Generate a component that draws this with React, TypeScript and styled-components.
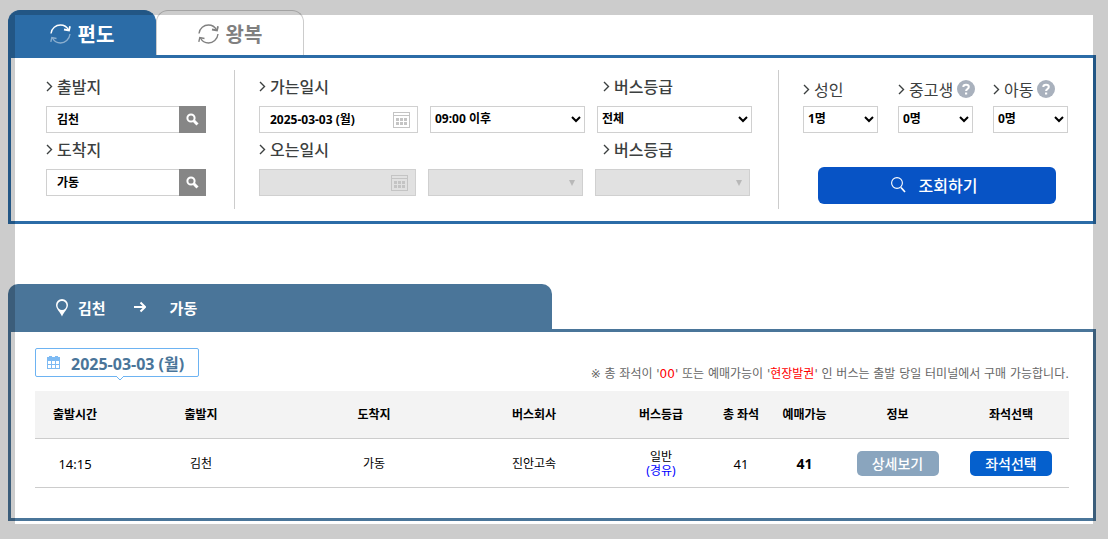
import React from 'react';
import styled, { createGlobalStyle } from 'styled-components';

const latin = "'Noto Sans', 'Noto Sans CJK KR', sans-serif";
const wide = "'DejaVu Sans', 'Noto Sans CJK KR', sans-serif";
const korean = "'Noto Sans CJK KR', sans-serif";

const GlobalStyle = createGlobalStyle`
  *, *::before, *::after { box-sizing: border-box; }
  body { margin: 0; background: #fff; color: #000; font-family: ${latin}; font-size: 12px; }
  button, input, select { font: inherit; color: inherit; border-radius: 0; }
  svg { flex: none; }
`;

const Page = styled.main`
  padding: 10px 12px 18px 8px;
`;

const Frame = styled.div`
  position: fixed;
  inset: 0;
  border: 15px solid rgba(0, 0, 0, 0.2);
  pointer-events: none;
`;

const Tabs = styled.div`
  display: flex;
  height: 45px;
`;

const Tab = styled.button<{ $active?: boolean }>`
  display: flex;
  align-items: center;
  justify-content: center;
  gap: 7px;
  width: 148px;
  padding: 2px 0 0 0;
  border: 1px solid ${p => (p.$active ? '#2b6ca7' : '#ccc')};
  border-bottom: 0;
  border-radius: 12px 12px 0 0;
  background: ${p => (p.$active ? '#2b6ca7' : '#fff')};
  color: ${p => (p.$active ? '#fff' : '#808080')};
  font-family: ${korean};
  font-size: 20px;
  font-weight: 700;
  line-height: 28px;
`;

const Panel = styled.section<{ $color: string }>`
  border: 3px solid ${p => p.$color};
`;

const SearchForm = styled.form`
  display: flex;
  padding: 12px 25px 12px 35px;
  min-height: 163px;
`;

const Group = styled.div<{ $grow?: boolean }>`
  flex: ${p => (p.$grow ? '1 1 0' : 'none')};
  padding-right: ${p => (p.$grow ? 26 : 28)}px;
  margin-right: 24px;
  border-right: 1px solid #ccc;
`;

const Line = styled.div`
  display: flex;
  gap: 12px;
  height: 63px;
`;

const Field = styled.div<{ $width: number }>`
  flex: 0 1 ${p => p.$width}px;
  min-width: 0;
`;

const Caption = styled.label<{ $indent?: number; $light?: boolean }>`
  display: flex;
  align-items: center;
  gap: 4px;
  height: 36px;
  padding-top: ${p => (p.$light ? 2 : 0)}px;
  padding-bottom: ${p => (p.$light ? 0 : 4)}px;
  padding-left: ${p => p.$indent || 0}px;
  color: #3c4040;
  font-family: ${korean};
  font-size: 16px;
  font-weight: ${p => (p.$light ? 400 : 500)};
  line-height: 24px;
  white-space: nowrap;
`;

const InputBox = styled.div<{ $off?: boolean }>`
  display: flex;
  align-items: center;
  height: 27px;
  border: 1px solid #d0d0d0;
  background: ${p => (p.$off ? '#e1e1e1' : '#fff')};
`;

const TextInput = styled.input`
  flex: 1;
  min-width: 0;
  height: 23px;
  padding: 0 0 2px 10px;
  border: 0;
  background: transparent;
  font-size: 12px;
  font-weight: 700;
`;

const IconButton = styled.button<{ $dark?: boolean }>`
  display: flex;
  align-items: center;
  justify-content: center;
  align-self: stretch;
  width: ${p => (p.$dark ? 27 : 32)}px;
  margin: ${p => (p.$dark ? '-1px' : '0')};
  padding: 0;
  border: 0;
  background: ${p => (p.$dark ? '#868686' : 'transparent')};
`;

const SelectWrap = styled.div`
  position: relative;
`;

const Select = styled.select`
  display: block;
  width: 100%;
  height: 27px;
  padding: 0 16px 2px 4px;
  border: 1px solid #d0d0d0;
  background: #fff;
  appearance: none;
  font-size: 12px;
  font-weight: 700;
  &:disabled { background: #e1e1e1; opacity: 1; }
`;

const SelectMark = styled.svg`
  position: absolute;
  right: 4px;
  top: 8px;
  pointer-events: none;
`;

const Passengers = styled.div`
  flex: none;
  width: 265px;
`;

const Counts = styled.div`
  display: flex;
  justify-content: space-between;
`;

const SearchButton = styled.button`
  display: flex;
  align-items: center;
  justify-content: center;
  gap: 13px;
  width: 238px;
  height: 37px;
  margin: 34px 0 0 15px;
  padding: 0 6px 2px 0;
  border: 0;
  border-radius: 6px;
  background: #0753c5;
  color: #fff;
  font-family: ${korean};
  font-size: 16px;
  font-weight: 500;
  line-height: 24px;
`;

const Results = styled.div`
  margin-top: 60px;
`;

const Route = styled.h2`
  display: flex;
  align-items: center;
  width: 50%;
  height: 45px;
  margin: 0;
  padding: 2px 0 0 47px;
  border-radius: 10px 10px 0 0;
  background: #4a7599;
  color: #fff;
  font-family: ${korean};
  font-size: 15px;
  font-weight: 700;
  line-height: 22px;
  gap: 9px;
`;

const Arrow = styled.svg`
  margin: 0 15px 2px 19px;
`;

const ResultBody = styled.div`
  padding: 16px 24px 30px;
`;

const Summary = styled.div`
  display: flex;
  justify-content: space-between;
  align-items: flex-end;
  height: 43px;
  padding-bottom: 8px;
`;

const DateBadge = styled.div`
  position: relative;
  display: flex;
  align-items: center;
  align-self: flex-start;
  gap: 11px;
  width: 164px;
  height: 29px;
  padding: 0 0 0 11px;
  border: 1px solid #6db3f2;
  border-radius: 2px;
  color: #4a7599;
  font-size: 16px;
  font-weight: 700;
  white-space: nowrap;
`;

const BadgeTip = styled.svg`
  position: absolute;
  left: 80px;
  bottom: -5px;
`;

const Notice = styled.p`
  margin: 0;
  color: #666;
  font-family: ${wide};
  font-size: 12px;
  line-height: 18px;
`;

const Red = styled.span`
  color: #f00;
`;

const Table = styled.table`
  width: 100%;
  table-layout: fixed;
  border-collapse: collapse;
  text-align: center;
`;

const Col = styled.col<{ $width: number }>`
  width: ${p => p.$width}px;
`;

const HeadCell = styled.th`
  height: 47px;
  padding: 1px 0 0;
  border-bottom: 1px solid #ccc;
  background: #f3f3f3;
  font-size: 12px;
  line-height: 18px;
`;

const Cell = styled.td<{ $bold?: boolean; $number?: boolean }>`
  height: 49px;
  padding: 2px 0 0;
  border-bottom: 1px solid #ccc;
  font-size: ${p => (p.$bold ? 14 : p.$number ? 13 : 12)}px;
  font-weight: ${p => (p.$bold ? 700 : 400)};
  line-height: 14px;
`;

const Via = styled.span`
  display: block;
  color: #00f;
`;

const RowButton = styled.button<{ $primary?: boolean }>`
  display: block;
  width: 82px;
  height: 25px;
  margin: 0 auto;
  padding: 0 0 2px;
  border: 0;
  border-radius: 5px;
  background: ${p => (p.$primary ? '#0560cd' : '#8aa5be')};
  color: #fff;
  font-family: ${korean};
  font-size: 14px;
  font-weight: 500;
  line-height: 20px;
`;

const Cycle = ({ faded }: { faded?: boolean }) => (
  <svg width="21" height="20" viewBox="0 0 21 20" fill="none" stroke="currentColor" strokeWidth="1.4">
    <path d="M1 9.5C1.500 4 6 1 10.500 1c3.500 0 6.500 2 8 5" />
    <path d="M14 5.500l5 1 1-4.300" strokeWidth="1.800" />
    <g opacity={faded ? 0.45 : 1}>
      <path d="M20 10C19.500 15.500 15 19 10.500 19c-3.500 0-6.500-2-8-5" />
      <path d="M6.500 14.500L1.800 13.500.8 17.800" />
    </g>
  </svg>
);

const Chevron = () => (
  <svg width="7" height="11" viewBox="0 0 7 11" fill="none" stroke="#3c4040" strokeWidth="1.400">
    <path d="M1 1l4.500 4.500L1 10" />
  </svg>
);

const Lens = () => (
  <svg width="13" height="13" viewBox="0 0 13 13" fill="none" stroke="#fff">
    <circle cx="5" cy="5" r="3.600" strokeWidth="2" />
    <path d="M7.800 7.800l3.700 3.700" strokeWidth="3" />
  </svg>
);

const ThinLens = () => (
  <svg width="15" height="16" viewBox="0 0 15 16" fill="none" stroke="#fff">
    <circle cx="6" cy="6" r="5.400" strokeWidth="1.100" />
    <path d="M10 10.500l4 4.500" strokeWidth="1.700" />
  </svg>
);

const CalendarGrid = () => (
  <svg width="17" height="16" viewBox="0 0 17 16" fill="none" stroke="#c4c4c4" shapeRendering="crispEdges">
    <path d="M.5.5h16v15H.5zM0 3.500h17" />
    <path fill="#c4c4c4" stroke="none" d="M3 6h3v3H3zM7 6h3v3H7zM11 6h3v3h-3zM3 10h3v3H3zM7 10h3v3H7zM11 10h3v3h-3z" />
  </svg>
);

const Calendar = () => (
  <svg width="13" height="13" viewBox="0 0 13 13" shapeRendering="crispEdges">
    <path fill="#7dbaf3" d="M2 0h3v1h3V0h3v1h2v4H0V1h2z" />
    <path fill="none" stroke="#7dbaf3" d="M.5 4.500v8h12v-8M4.500 5v8M8.500 5v8M0 8.500h13" />
  </svg>
);

const Question = () => (
  <svg width="18" height="18" viewBox="0 0 18 18" fill="none">
    <circle cx="9" cy="9" r="9" fill="#a9b1bd" />
    <path d="M6.300 7C6.300 4 11.800 4 11.800 7c0 2-2.700 2-2.700 4" stroke="#fff" strokeWidth="2" />
    <path d="M8 12.500h2.200v2H8z" fill="#fff" />
  </svg>
);

const Pin = () => (
  <svg width="14" height="18" viewBox="0 0 14 18">
    <path fill="#fff" fillRule="evenodd" d="M7 0a6 6 0 0 1 6 6c0 3.500-4 7-6 11.500C5 13 1 9.500 1 6a6 6 0 0 1 6-6zm0 2a4.500 4.500 0 1 0 0 9 4.500 4.500 0 0 0 0-9z" />
  </svg>
);

function Picker({ id, label, value }: { id: string; label?: string; value?: string }) {
  return (
    <SelectWrap>
      <Select id={id} aria-label={label} disabled={!value}>
        <option>{value || ''}</option>
      </Select>
      {value ? (
        <SelectMark width="10" height="10" viewBox="0 0 10 10" fill="none" stroke="#000" strokeWidth="2">
          <path d="M1 3l4 4 4-4" />
        </SelectMark>
      ) : (
        <SelectMark width="10" height="12" viewBox="0 0 10 12">
          <path d="M0 3h6L3 9z" fill="#b8b8b8" />
        </SelectMark>
      )}
    </SelectWrap>
  );
}

function Place({ id, label, value }: { id: string; label: string; value: string }) {
  return (
    <Line>
      <Field $width={160}>
        <Caption htmlFor={id}><Chevron />{label}</Caption>
        <InputBox>
          <TextInput id={id} defaultValue={value} />
          <IconButton type="button" $dark aria-label={label}><Lens /></IconButton>
        </InputBox>
      </Field>
    </Line>
  );
}

function Trip({ id, label, date, time, grade }: { id: string; label: string; date?: string; time?: string; grade?: string }) {
  const off = !date;
  return (
    <Line>
      <Field $width={off ? 157 : 159}>
        <Caption htmlFor={id + '-date'}><Chevron />{label}</Caption>
        <InputBox $off={off}>
          <TextInput id={id + '-date'} defaultValue={date} disabled={off} />
          <IconButton type="button" disabled={off} aria-label={label}><CalendarGrid /></IconButton>
        </InputBox>
      </Field>
      <Field $width={155}>
        <Caption as="div" />
        <Picker id={id + '-time'} label={label} value={time} />
      </Field>
      <Field $width={155}>
        <Caption htmlFor={id + '-grade'} $indent={off ? 8 : 6}><Chevron />버스등급</Caption>
        <Picker id={id + '-grade'} value={grade} />
      </Field>
    </Line>
  );
}

const passengers = [
  { id: 'adult', label: '성인', value: '1명', help: false },
  { id: 'teen', label: '중고생', value: '0명', help: true },
  { id: 'child', label: '아동', value: '0명', help: true },
];

const columns = [
  { name: '출발시간', width: 80 },
  { name: '출발지', width: 172 },
  { name: '도착지', width: 174 },
  { name: '버스회사', width: 146 },
  { name: '버스등급', width: 108 },
  { name: '총 좌석', width: 52 },
  { name: '예매가능', width: 75 },
  { name: '정보', width: 111 },
  { name: '좌석선택', width: 116 },
];

export default function App() {
  return (
    <Page>
      <GlobalStyle />
      <Tabs>
        <Tab type="button" $active><Cycle faded />편도</Tab>
        <Tab type="button"><Cycle />왕복</Tab>
      </Tabs>
      <Panel $color="#2b6ca7">
        <SearchForm>
          <Group>
            <Place id="from" label="출발지" value="김천" />
            <Place id="to" label="도착지" value="가동" />
          </Group>
          <Group $grow>
            <Trip id="go" label="가는일시" date="2025-03-03 (월)" time="09:00 이후" grade="전체" />
            <Trip id="back" label="오는일시" />
          </Group>
          <Passengers>
            <Counts>
              {passengers.map(p => (
                <Field key={p.id} $width={75}>
                  <Caption htmlFor={p.id} $light><Chevron />{p.label}{p.help && <Question />}</Caption>
                  <Picker id={p.id} value={p.value} />
                </Field>
              ))}
            </Counts>
            <SearchButton type="button"><ThinLens />조회하기</SearchButton>
          </Passengers>
        </SearchForm>
      </Panel>
      <Results>
        <Route>
          <Pin />김천
          <Arrow width="12" height="12" viewBox="0 0 12 12" fill="none" stroke="#fff" strokeWidth="2">
            <path d="M0 6h11M6.500 1.500L11 6l-4.500 4.500" />
          </Arrow>
          가동
        </Route>
        <Panel $color="#4a7599">
          <ResultBody>
            <Summary>
              <DateBadge>
                <Calendar />2025-03-03 (월)
                <BadgeTip width="8" height="5" viewBox="0 0 8 5">
                  <path d="M0 0l4 4 4-4" fill="#fff" stroke="#6db3f2" />
                </BadgeTip>
              </DateBadge>
              <Notice>
                ※ 총 좌석이 '<Red>00</Red>' 또는 예매가능이 '<Red>현장발권</Red>' 인 버스는 출발 당일 터미널에서 구매 가능합니다.
              </Notice>
            </Summary>
            <Table>
              <colgroup>{columns.map(c => <Col key={c.name} $width={c.width} />)}</colgroup>
              <thead>
                <tr>{columns.map(c => <HeadCell key={c.name} scope="col">{c.name}</HeadCell>)}</tr>
              </thead>
              <tbody>
                <tr>
                  <Cell $number>14:15</Cell>
                  <Cell>김천</Cell>
                  <Cell>가동</Cell>
                  <Cell>진안고속</Cell>
                  <Cell>일반<Via>(경유)</Via></Cell>
                  <Cell $number>41</Cell>
                  <Cell $bold>41</Cell>
                  <Cell><RowButton type="button">상세보기</RowButton></Cell>
                  <Cell><RowButton type="button" $primary>좌석선택</RowButton></Cell>
                </tr>
              </tbody>
            </Table>
          </ResultBody>
        </Panel>
      </Results>
      <Frame />
    </Page>
  );
}
